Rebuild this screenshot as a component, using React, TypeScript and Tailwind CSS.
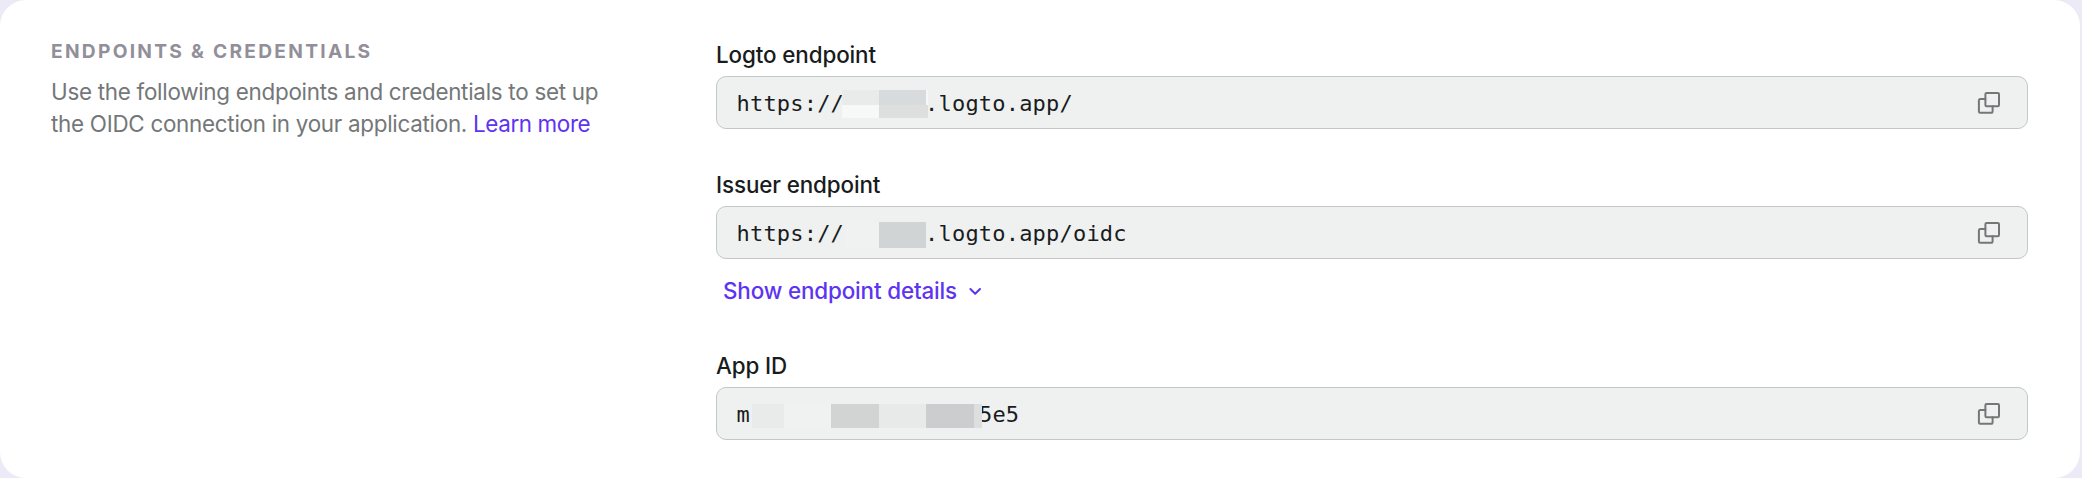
import React from 'react';

type Block = { box: string };

function CopyIcon() {
  return (
    <svg className="h-8 w-8 shrink-0" viewBox="0 0 32 32" fill="none" stroke="#747778" strokeWidth="2" strokeLinejoin="round" strokeLinecap="round">
      <rect x="12.4" y="5.9" width="13.6" height="13.4" rx="1.2" />
      <path d="M12.4 12.1H7.1a1.2 1.2 0 0 0-1.2 1.2v11.3a1.2 1.2 0 0 0 1.2 1.2h11.3a1.2 1.2 0 0 0 1.2-1.2V19.3" />
    </svg>
  );
}

function Field({ label, prefix, gap, suffix, blocks, className }: { label: string; prefix: string; gap: string; suffix: string; blocks: Block[]; className: string }) {
  return (
    <div className={className}>
      <div className="h-8 pt-px text-[22.4px] leading-8 font-medium tracking-[-0.11px] text-[#191c1d]">{label}</div>
      <div className="relative mt-[6px] flex h-[53px] items-center justify-between rounded-[10px] border border-[#c4c7c7] bg-[#eff1f1] pr-[22px] pl-[19.5px]">
        <div className="flex pt-[3px] font-['DejaVu_Sans_Mono',monospace] text-[22px] leading-8 tracking-[0.2px] text-[#191c1d]">
          <span>{prefix}</span>
          <span className={gap} />
          <span>{suffix}</span>
        </div>
        {blocks.map((b) => (
          <span key={b.box} className={`absolute ${b.box}`} />
        ))}
        <CopyIcon />
      </div>
    </div>
  );
}

export default function App() {
  return (
    <div className="h-[478px] w-[2082px] bg-[#eceaf6] pr-[2px] font-['Inter',sans-serif]">
      <div className="flex h-full rounded-[26px] bg-white pr-[52px] pl-[51px]">
        <section className="w-[665px] shrink-0 pt-[35px]">
          <h2 className="text-[19.2px] leading-8 font-bold tracking-[2.27px] text-[#928f9a]">ENDPOINTS &amp; CREDENTIALS</h2>
          <p className="mt-[9px] text-[22.4px] leading-8 tracking-[-0.27px] text-[#747778]">
            Use the following endpoints and credentials to set up
            <br />
            the OIDC connection in your application. <a className="tracking-[-0.38px] text-[#5d34f2]">Learn more</a>
          </p>
        </section>
        <section className="grow">
          <Field
            className="pt-[38px]"
            label="Logto endpoint"
            prefix="https://"
            gap="w-[81px]"
            suffix=".logto.app/"
            blocks={[
              { box: 'left-[125px] top-[13px] h-[15px] w-[37px] bg-[#e9ebeb]' },
              { box: 'left-[125px] top-[28px] h-[13px] w-[37px] bg-[#f7f9f8]' },
              { box: 'left-[162px] top-[13px] h-[15px] w-[47px] bg-[#d8dbdc]' },
              { box: 'left-[162px] top-[28px] h-[13px] w-[49px] bg-[#dddfde]' },
              { box: 'left-[209px] top-[13px] h-[15px] w-[2px] bg-[#f6f7f7]' },
            ]}
          />
          <Field
            className="pt-[39px]"
            label="Issuer endpoint"
            prefix="https://"
            gap="w-[81px]"
            suffix=".logto.app/oidc"
            blocks={[
              { box: 'left-[129px] top-[15px] h-[26px] w-[33px] bg-[#f0f1f1]' },
              { box: 'left-[162px] top-[15px] h-[26px] w-[47px] bg-[#d1d4d4]' },
            ]}
          />
          <button className="mt-4 ml-[7px] flex h-8 items-center gap-[8px] text-[22.4px] leading-8 font-medium tracking-[-0.14px] text-[#5d34f2]">
            Show endpoint details
            <svg className="h-5 w-5" viewBox="0 0 20 20" fill="none" stroke="currentColor" strokeWidth="2" strokeLinecap="round" strokeLinejoin="round">
              <path d="M5.4 8l4.8 4.8L15 8" />
            </svg>
          </button>
          <Field
            className="pt-[42px]"
            label="App ID"
            prefix="m"
            gap="w-[229px]"
            suffix="5e5"
            blocks={[
              { box: 'left-[35px] top-[16px] h-[24px] w-[32px] bg-[#e9ebea]' },
              { box: 'left-[67px] top-[16px] h-[24px] w-[47px] bg-[#f0f2f1]' },
              { box: 'left-[114px] top-[16px] h-[24px] w-[48px] bg-[#d2d4d3]' },
              { box: 'left-[162px] top-[16px] h-[24px] w-[47px] bg-[#e8eae9]' },
              { box: 'left-[209px] top-[16px] h-[24px] w-[48px] bg-[#cccdcf]' },
              { box: 'left-[257px] top-[16px] h-[24px] w-[8px] bg-[#dddfdf]' },
            ]}
          />
        </section>
      </div>
    </div>
  );
}
